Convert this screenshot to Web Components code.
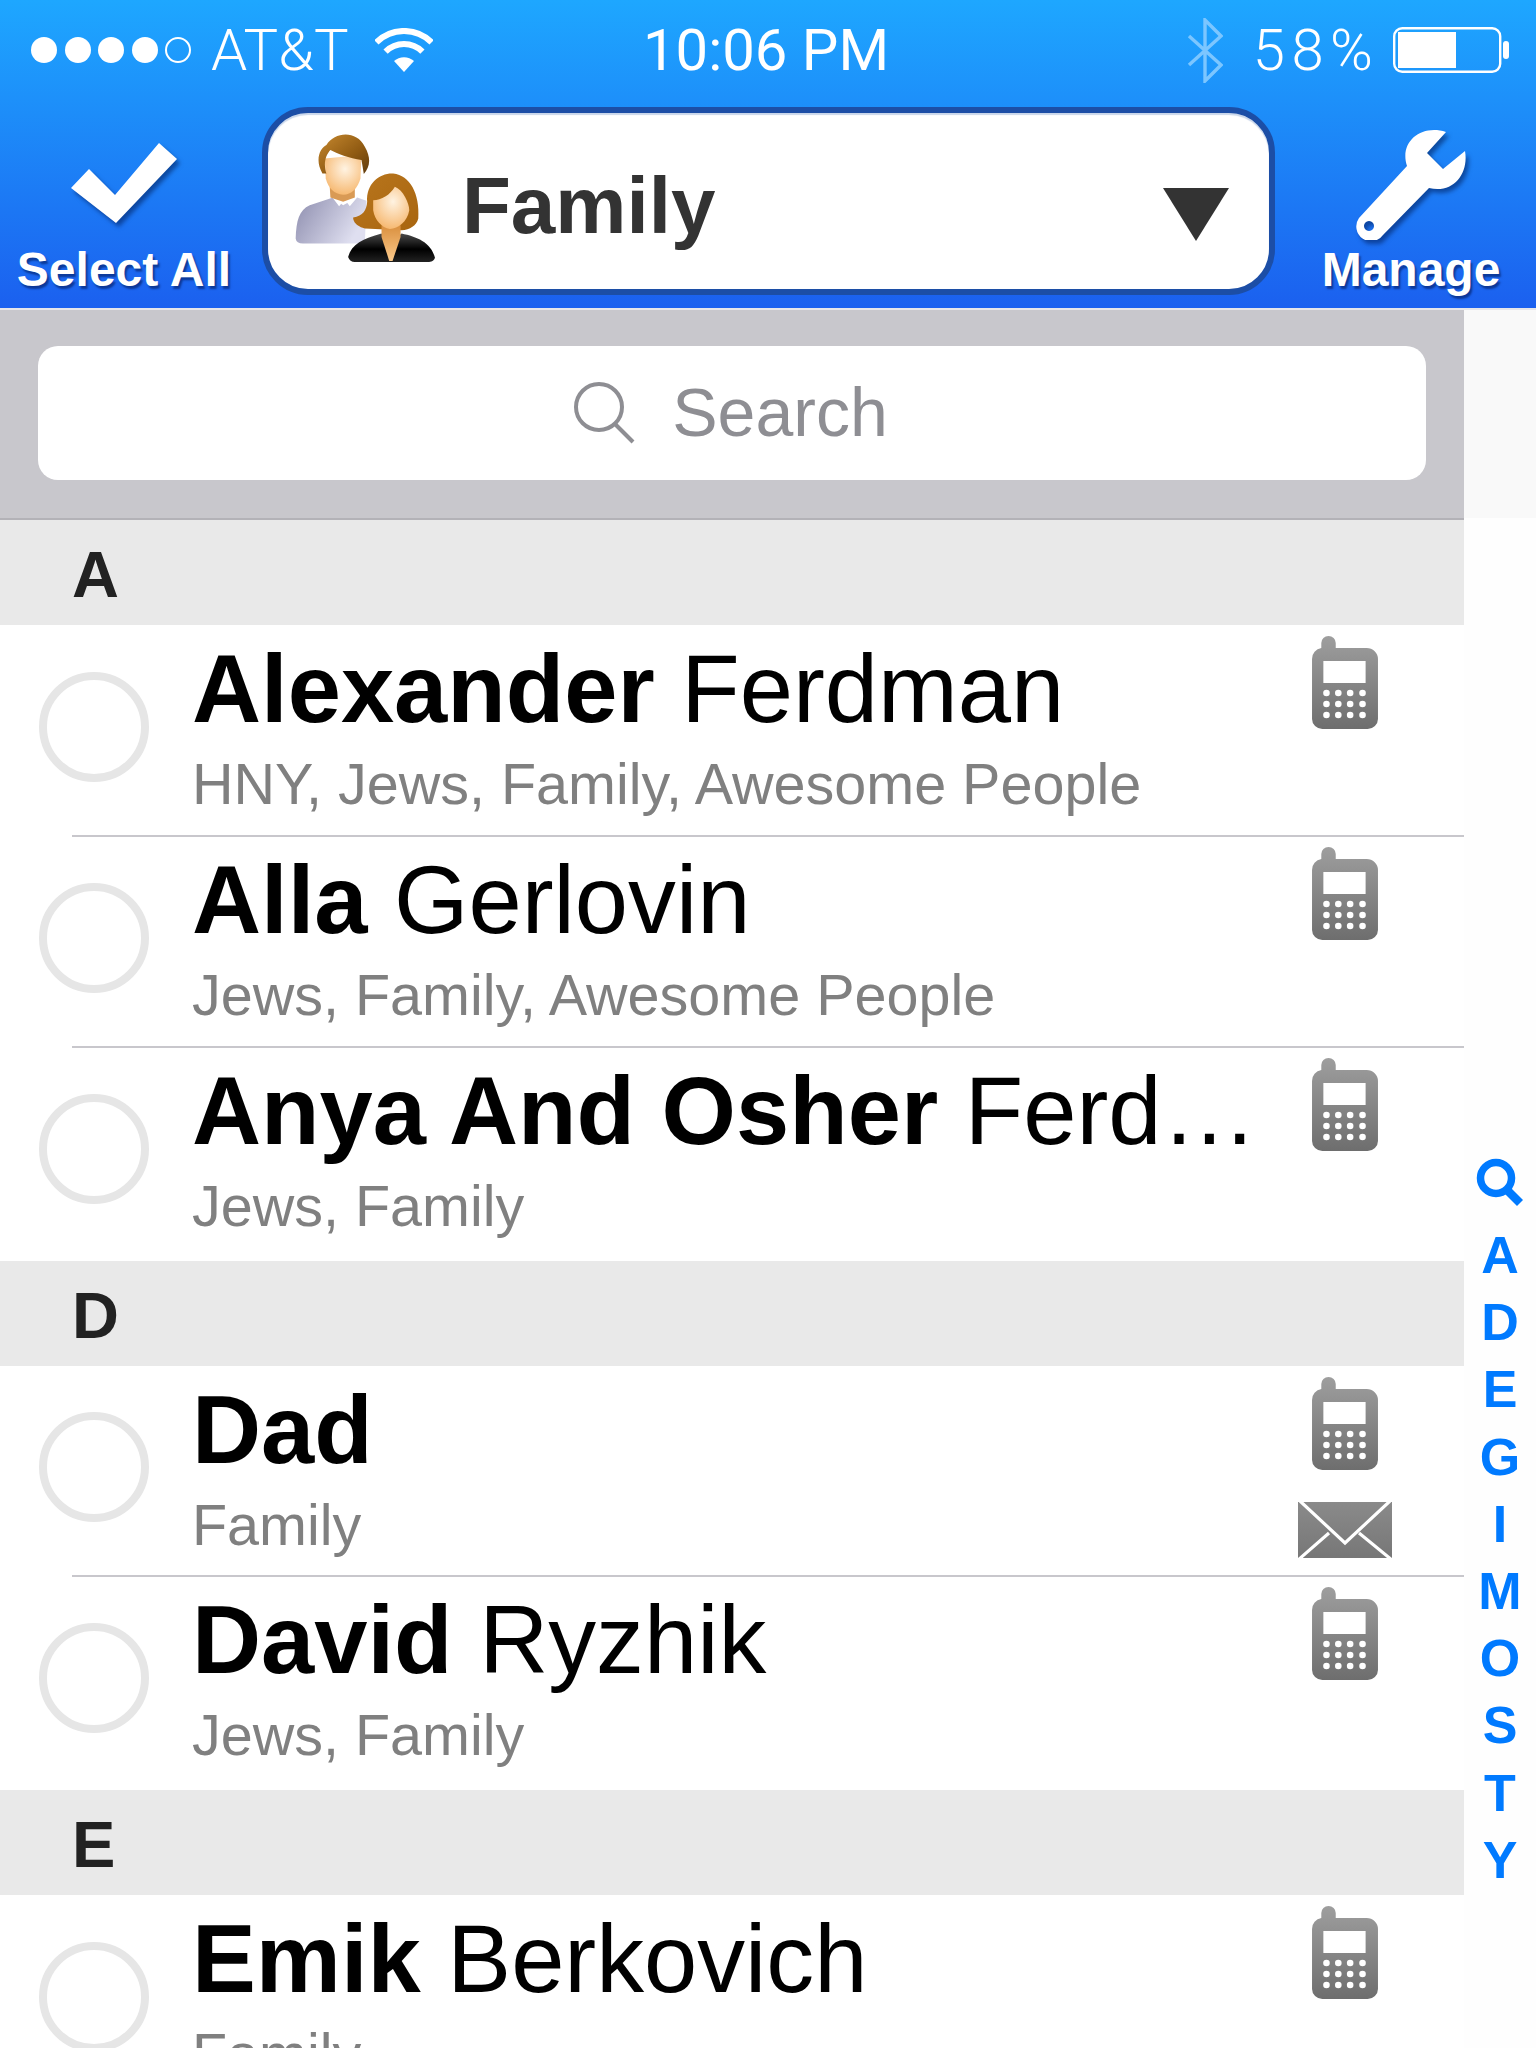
<!DOCTYPE html>
<html lang="en"><head><meta charset="utf-8"><title>Contacts</title>
<style>
html,body{margin:0;padding:0;background:#fff;height:2048px;overflow:hidden}
body{font-family:"Liberation Sans",Arial,sans-serif}
app-shell{display:block}
</style></head>
<body>
<app-shell></app-shell>
<template id="phone"><svg class="ph" width="68" height="94" viewBox="0 0 66 94" preserveAspectRatio="none"><defs><linearGradient id="pg" x1="0" y1="0" x2="0" y2="1"><stop offset="0" stop-color="#9e9e9e"/><stop offset="1" stop-color="#6e6e6e"/></linearGradient></defs><path fill="url(#pg)" d="M10 12V7a7 7 0 0 1 14 0v5h30a11 11 0 0 1 11 11v60a10 10 0 0 1-10 10H11A10 10 0 0 1 1 83V23a11 11 0 0 1 9-11z"/><rect x="12" y="25" width="41" height="22" fill="#fff"/><g fill="#fff"><circle cx="15" cy="57" r="3.2"/><circle cx="26.5" cy="57" r="3.2"/><circle cx="38" cy="57" r="3.2"/><circle cx="50" cy="57" r="3.2"/><circle cx="15" cy="68" r="3.2"/><circle cx="26.5" cy="68" r="3.2"/><circle cx="38" cy="68" r="3.2"/><circle cx="50" cy="68" r="3.2"/><circle cx="15" cy="79" r="3.2"/><circle cx="26.5" cy="79" r="3.2"/><circle cx="38" cy="79" r="3.2"/><circle cx="50" cy="79" r="3.2"/></g></svg></template>
<template id="mail"><svg class="ml" width="94" height="58" viewBox="0 0 94 58"><defs><linearGradient id="mg" x1="0" y1="0" x2="0" y2="1"><stop offset="0" stop-color="#8a8a8a"/><stop offset="1" stop-color="#777"/></linearGradient></defs><rect x="0" y="1" width="94" height="56" fill="url(#mg)"/><path d="M2 0 47 42 92 0M0 59 31 32M94 59 61 32" fill="none" stroke="#fff" stroke-width="3.2"/></svg></template>
<script>
const def=(name,html,init)=>customElements.define(name,class extends HTMLElement{
  constructor(){super();this.attachShadow({mode:"open"}).innerHTML=html;}
  connectedCallback(){if(init)init(this,this.shadowRoot);}
});

def("status-bar",`<style>
:host{display:grid;grid-template-columns:1fr auto 1fr;align-items:center;height:100px;color:#fff;font:300 58px Roboto,"Liberation Sans",sans-serif;padding:0 26px 0 31px;box-sizing:border-box}
.l,.r{display:flex;align-items:center}
.r{justify-content:flex-end}
.d{width:26px;height:26px;border-radius:50%;background:#fff;margin-right:7.6px;box-sizing:border-box}
.d.o{background:none;border:2px solid #fff}
.c{margin:0 26px 0 12px}
.t{font-weight:400;margin-right:9px}
.bt{margin-right:30px}
.p{margin-right:13.5px;letter-spacing:6.5px}
svg{display:block}
</style>
<div class="l"><i class="d"></i><i class="d"></i><i class="d"></i><i class="d"></i><i class="d o"></i><span class="c">AT&amp;T</span>
<svg width="58" height="44" viewBox="0 0 58 44"><path d="M1.4 14.4A39 39 0 0 1 56.6 14.4M10.6 23.6A26 26 0 0 1 47.4 23.6" fill="none" stroke="#fff" stroke-width="6"/><path d="M29 44 19 33A15 15 0 0 1 39 33Z" fill="#fff"/></svg></div>
<div class="t">10:06 PM</div>
<div class="r"><svg class="bt" width="36" height="65" viewBox="0 0 36 65"><path d="M2 18 34 47 18 63V2L34 18 2 47" fill="none" stroke="#7cc6ff" stroke-width="3.4"/></svg><span class="p">58%</span>
<svg width="117" height="46" viewBox="0 0 117 46"><rect x="1.2" y="1.2" width="106" height="43.6" rx="8" fill="none" stroke="#fff" stroke-width="2.4"/><rect x="5" y="5" width="58" height="36" fill="#fff"/><rect x="110" y="14" width="6" height="18" rx="3" fill="#fff"/></svg></div>`);

def("nav-button",`<style>
:host{display:flex;flex-direction:column;align-items:center;justify-content:flex-end;height:188px;color:#fff;font:bold 48px/50px "Liberation Sans",sans-serif;text-shadow:2px 3px 2px rgba(0,20,80,.55)}
.i{flex:1;display:flex;align-items:flex-start;padding-top:var(--it,21px);filter:drop-shadow(3px 4px 2px rgba(0,30,90,.55))}
.lb{white-space:nowrap}
</style><div class="i"><slot name="icon"></slot></div><div class="lb"><slot></slot></div>`);

def("people-icon",`<style>:host{display:block;width:147px;height:137px}svg{display:block;filter:blur(.4px)}</style>
<svg width="147" height="137" viewBox="70 60 440 410"><defs>
<linearGradient id="h" x1="0" y1="0" x2="1" y2="1"><stop offset="0" stop-color="#c7892f"/><stop offset=".6" stop-color="#8f5a12"/><stop offset="1" stop-color="#5f3a0c"/></linearGradient>
<linearGradient id="w" x1="0" y1="0" x2="1" y2="1"><stop offset="0" stop-color="#b9761d"/><stop offset="1" stop-color="#a8650f"/></linearGradient>
<radialGradient id="f" cx=".55" cy=".35" r=".7"><stop offset="0" stop-color="#fff3e2"/><stop offset="1" stop-color="#f6b56a"/></radialGradient>
<linearGradient id="s" x1="0" y1="0" x2="1" y2=".4"><stop offset="0" stop-color="#8d8dae"/><stop offset="1" stop-color="#dfdff0"/></linearGradient>
<linearGradient id="b" x1="0" y1="0" x2="0" y2="1"><stop offset="0" stop-color="#4a4a4a"/><stop offset=".55" stop-color="#000"/><stop offset="1" stop-color="#222"/></linearGradient>
<linearGradient id="n" x1="0" y1="0" x2="0" y2="1"><stop offset="0" stop-color="#d98f3e"/><stop offset="1" stop-color="#fbc98a"/></linearGradient></defs>
<path fill="url(#s)" d="M78 385C80 330 88 300 120 285L190 262 220 285 262 262 290 272 285 400H100Q80 400 78 385Z"/>
<path fill="#fff" d="M188 262 208 288 225 268 240 288 262 262Z"/>
<path fill="#d99a55" d="M180 230H255V262L220 275 182 262Z"/>
<path fill="url(#f)" d="M165 145 275 135 272 205Q258 252 220 254 180 250 168 205Z"/>
<path fill="url(#h)" d="M158 190C135 150 150 115 170 105 195 65 260 60 285 110 305 145 300 170 282 192L275 150C240 145 200 130 182 120 168 135 160 160 170 190Z"/>
<path fill="url(#w)" d="M285 355C250 345 250 325 250 322 280 318 290 300 292 275 288 220 330 188 370 190 420 195 450 250 445 325 440 345 420 360 395 360Z"/>
<path fill="url(#b)" d="M235 440C245 402 280 385 335 370L360 400 395 370C440 380 482 395 495 442 490 455 480 455 470 455H255Q240 455 235 440Z"/>
<path fill="url(#n)" d="M335 345H392V380L368 452H358L335 380Z"/>
<path fill="url(#f)" d="M310 270C335 270 360 255 375 230 400 240 418 280 418 300 412 335 385 355 360 356 335 352 315 330 310 300Z"/>
</svg>`);

def("nav-bar",`<style>
:host{display:grid;grid-template-columns:262px 1013px 261px;height:208px;box-sizing:border-box;padding-top:7px}
.pill{box-sizing:border-box;height:188px;border:6px solid #1c4ea6;border-radius:46px;background:#fff;display:flex;align-items:center;padding:0 40px 0 25px;box-shadow:inset 0 2px 1px #c9d6ea;color:#333;font:bold 80px "Liberation Sans",sans-serif}
.nm{flex:1;margin-left:22px;padding-top:10px}
.tri{width:0;height:0;border:33px solid transparent;border-top:53px solid #333;border-bottom:0;margin-top:27px}
people-icon{margin-top:-5px}
.s{--it:36px;padding-right:14px}
.m{--it:21px;padding-left:11px}
svg{display:block}
</style>
<nav-button class="s"><svg slot="icon" width="106" height="80" viewBox="0 0 106 80"><path d="M0 45 18 26 44 52 88 0 106 16 45 80Z" fill="#fff"/></svg>Select All</nav-button>
<div class="pill"><people-icon></people-icon><div class="nm">Family</div><div class="tri"></div></div>
<nav-button class="m"><svg slot="icon" width="112" height="112" viewBox="0 0 112 112"><path fill="#fff" fill-rule="evenodd" d="M91 4 72 25 88 41 110 23C114 46 98 66 74 60L28 107A14 14 0 0 1 4 90L52 38C44 14 66-4 91 4ZM14 93a5 5 0 1 0 .01 0Z"/></svg>Manage</nav-button>`);

def("search-bar",`<style>
:host{display:flex;height:210px;box-sizing:border-box;padding:36px 38px 38px;background:#c8c7cc;border-bottom:2px solid #b3b2b7}
.f{flex:1;background:#fff;border-radius:20px;display:flex;align-items:center;justify-content:center;color:#8e8e93;font:68px "Liberation Sans",sans-serif;gap:36px;padding-right:2px}
span{margin-top:-2px}
svg{display:block}
</style><div class="f"><svg width="62" height="62" viewBox="0 0 62 62"><circle cx="25" cy="25" r="23" fill="none" stroke="#8e8e93" stroke-width="4"/><path d="M41 42 59 60" stroke="#8e8e93" stroke-width="4"/></svg><span>Search</span></div>`);

def("section-head",`<style>
:host{display:block;height:105px;box-sizing:border-box;background:#e9e9e9;color:#222;font:bold 65px/105px "Liberation Sans",sans-serif;padding-left:72px}
div{transform:translateY(2px)}
</style><div><slot></slot></div>`);

def("contact-row",`<style>
:host{display:block}
.r{display:grid;grid-template-columns:192px 1072px 162px;height:211px;box-sizing:border-box}
:host([last]) .r{height:214px}
:host([mail]) .r{height:209.5px}
.c{padding:47px 0 0 39px}
:host([mail]) .c{padding-top:46px}
.c i{display:block;box-sizing:border-box;width:110px;height:110px;border-radius:50%;border:8px solid #e6e6e6}
.t{min-width:0}
.n{font:95.7px/110px "Liberation Sans",sans-serif;color:#000;white-space:nowrap;overflow:hidden;text-overflow:ellipsis;padding-top:9px}
.s{font:57.5px/64px "Liberation Sans",sans-serif;color:#808080;white-space:nowrap;margin-top:8px}
.i{display:flex;flex-direction:column;align-items:center;padding-top:11px;gap:30px}
.i>*{display:block;filter:blur(.5px)}
.sep{height:2px;background:#c8c7cc;margin:-1px 0 -1px 72px;position:relative}
:host([last]) .sep{display:none}
</style><div class="r"><div class="c"><i></i></div><div class="t"><div class="n"><slot></slot></div><div class="s"></div></div><div class="i"></div></div><div class="sep"></div>`,
(h,s)=>{s.querySelector(".s").textContent=h.getAttribute("tags")||"";
 const i=s.querySelector(".i");
 if(!i.children.length){i.append(document.getElementById("phone").content.cloneNode(true));
 if(h.hasAttribute("mail"))i.append(document.getElementById("mail").content.cloneNode(true));}});

def("index-bar",`<style>
:host{display:flex;flex-direction:column;align-items:center;height:100%;box-sizing:border-box;padding-top:848px;background:linear-gradient(#f9f9f9 208px,#fefefe 208px);color:#007aff;font:bold 52px/67.2px "Liberation Sans",sans-serif}
svg{display:block;margin-bottom:16px}
span{display:block;height:67.2px}
</style><svg width="48" height="48" viewBox="0 0 48 48"><circle cx="20" cy="20" r="15.5" fill="none" stroke="#007aff" stroke-width="7.5"/><path d="M30 31 44 45" stroke="#007aff" stroke-width="8.5"/></svg>
<span>A</span><span>D</span><span>E</span><span>G</span><span>I</span><span>M</span><span>O</span><span>S</span><span>T</span><span>Y</span>`);

def("app-shell",`<style>
:host{display:block;width:1536px;height:2048px;overflow:hidden}
.h{background:linear-gradient(#1ea7ff,#1b60ef);height:308px}
.line{height:2px;background:#e6e6ea}
.b{display:grid;grid-template-columns:1464px 72px;height:1738px}
</style>
<div class="h"><status-bar></status-bar><nav-bar></nav-bar></div><div class="line"></div>
<div class="b"><div>
<search-bar></search-bar>
<section-head>A</section-head>
<contact-row tags="HNY, Jews, Family, Awesome People"><b>Alexander</b> Ferdman</contact-row>
<contact-row tags="Jews, Family, Awesome People"><b>Alla</b> Gerlovin</contact-row>
<contact-row last tags="Jews, Family"><b>Anya And Osher</b> Ferdman</contact-row>
<section-head>D</section-head>
<contact-row mail tags="Family"><b>Dad</b></contact-row>
<contact-row last tags="Jews, Family"><b>David</b> Ryzhik</contact-row>
<section-head>E</section-head>
<contact-row tags="Family"><b>Emik</b> Berkovich</contact-row>
</div><index-bar></index-bar></div>`);
</script>
</body></html>
